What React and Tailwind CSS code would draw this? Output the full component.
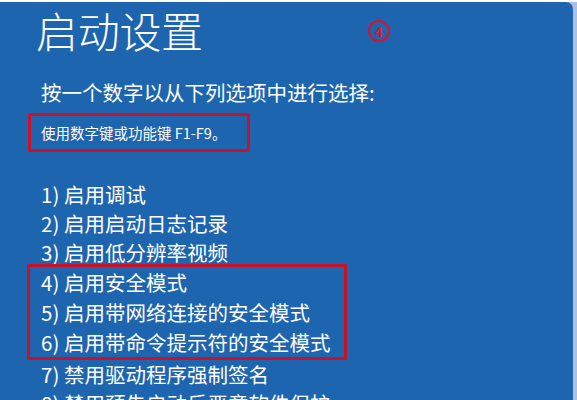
export default function App() {
  const font = { fontFamily: '"Noto Sans CJK SC", "Noto Sans", sans-serif' };
  const items1 = ["1) 启用调试", "2) 启用启动日志记录", "3) 启用低分辨率视频"];
  const items2 = ["4) 启用安全模式", "5) 启用带网络连接的安全模式", "6) 启用带命令提示符的安全模式"];
  const items3 = ["7) 禁用驱动程序强制签名", "8) 禁用预先启动反恶意软件保护", "9) 禁用失败后自动重新启动"];
  return (
    <div className="w-[577px] h-[400px] overflow-hidden bg-white flex flex-col pt-[2px]" style={font}>
      <div className="flex flex-1 bg-[#a9c1de]">
        <div className="w-[573px] h-[398px] overflow-hidden bg-[#1e65b0] rounded-tr-[7px] pl-[41px] pt-[6px] text-white flex flex-col">
          <div className="shrink-0 flex items-center h-[44px]">
            <div className="text-[42px] leading-[44px] font-light -ml-[5px] tracking-[-0.3px]">启动设置</div>
            <div className="ml-[165px] mt-[2px] w-[22px] h-[22px] rounded-full border-2 border-[#d8132c] flex items-center justify-center text-[14px] leading-[14px] font-bold text-[#e0142e]">
              4
            </div>
          </div>
          <div className="shrink-0 mt-[26px] text-[20.5px] leading-[28px]">按一个数字以从下列选项中进行选择:</div>
          <div className="shrink-0 mt-[7px] -ml-[13px] w-[222px] h-[39px] border-[3px] border-[#cc1027] rounded-[2px] pl-[10px] flex items-center text-[14.5px] leading-[20px]">
            使用数字键或功能键 F1-F9。
          </div>
          <div className="shrink-0 mt-[28px] flex flex-col text-[20.5px] leading-[29px]">
            {items1.map((t) => (
              <div key={t}>{t}</div>
            ))}
          </div>
          <div className="shrink-0 -mt-[3px] -ml-[14px] w-[320px] border-[3px] border-[#cc1027] rounded-[2px] pl-[11px] flex flex-col text-[20.5px] leading-[30px]">
            {items2.map((t) => (
              <div key={t}>{t}</div>
            ))}
          </div>
          <div className="shrink-0 flex flex-col text-[20.5px] leading-[29px]">
            {items3.map((t) => (
              <div key={t}>{t}</div>
            ))}
          </div>
        </div>
      </div>
    </div>
  );
}
